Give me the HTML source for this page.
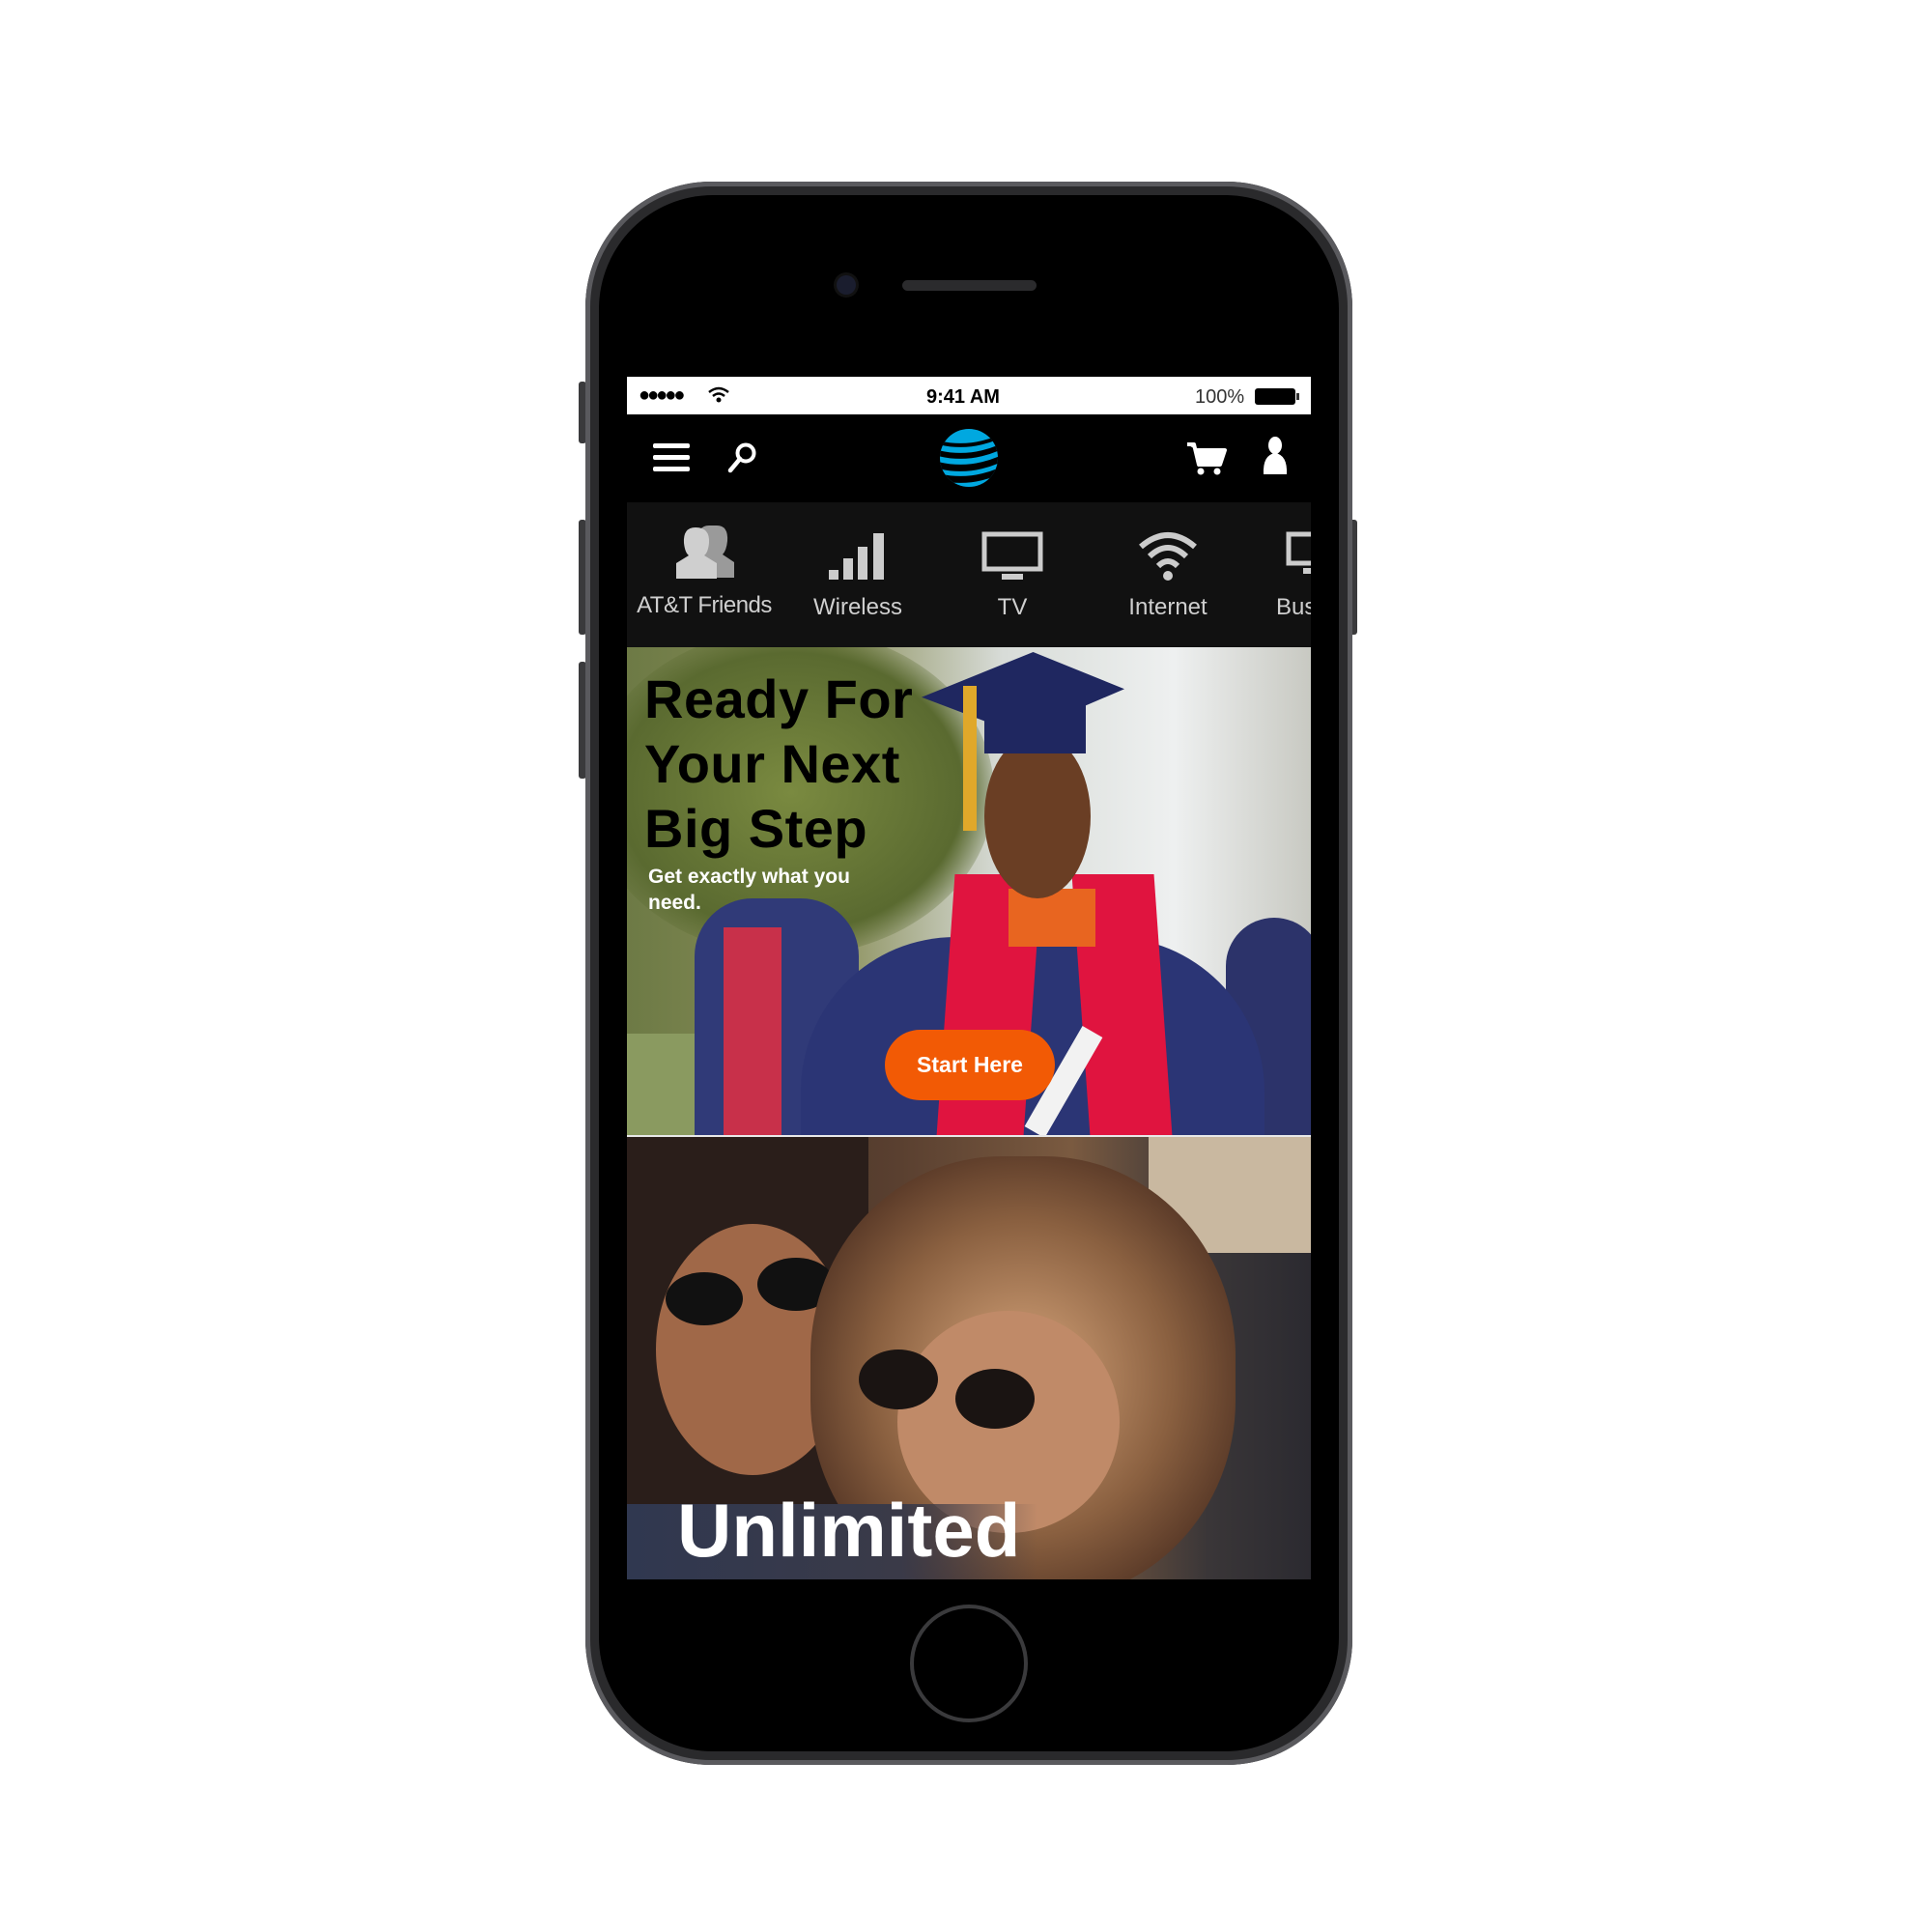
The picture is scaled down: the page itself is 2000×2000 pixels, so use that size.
<!DOCTYPE html>
<html><head><meta charset="utf-8"><style>
*{margin:0;padding:0;box-sizing:border-box}
body{width:2000px;height:2000px;background:#fff;position:relative;overflow:hidden;font-family:"Liberation Sans",sans-serif}
.abs{position:absolute}
.phone{left:606px;top:188px;width:794px;height:1639px;border-radius:130px;background:#2a2a2c;box-shadow:inset 0 0 0 5px #5a5a5e}
.face{left:620px;top:202px;width:766px;height:1611px;border-radius:118px;background:#000}
.btn{background:#3a3a3c;width:8px;border-radius:3px}
.screen{left:649px;top:390px;width:708px;height:1245px;overflow:hidden;background:#000}
.cat{position:absolute;top:0;width:160px;text-align:center;color:#cfcfcf;font-size:24px}
</style></head><body>
<div class="abs btn" style="left:599px;top:395px;height:64px"></div>
<div class="abs btn" style="left:599px;top:538px;height:119px"></div>
<div class="abs btn" style="left:599px;top:685px;height:121px"></div>
<div class="abs btn" style="left:1397px;top:538px;height:119px"></div>
<div class="abs phone"></div>
<div class="abs face"></div>
<div class="abs" style="left:866px;top:285px;width:20px;height:20px;border-radius:50%;background:#1a1d2e;box-shadow:0 0 0 3px #111"></div>
<div class="abs" style="left:934px;top:290px;width:139px;height:11px;border-radius:6px;background:#2b2b2d"></div>
<div class="abs" style="left:942px;top:1661px;width:122px;height:122px;border-radius:50%;border:4px solid #3a3a3c"></div>

<div class="abs screen">
 <div class="abs" style="left:0;top:0;width:708px;height:39px;background:#fff;font-size:20px;color:#000">
  <div class="abs" style="left:12px;top:11px;letter-spacing:-3px;font-size:20px;line-height:16px">●●●●●</div>
  <svg class="abs" style="left:83px;top:10px" width="24" height="18" viewBox="0 0 24 18"><path d="M2 6 Q12 -2 22 6" stroke="#000" stroke-width="2.5" fill="none"/><path d="M6 10 Q12 5 18 10" stroke="#000" stroke-width="2.5" fill="none"/><circle cx="12" cy="14" r="2.5"/></svg>
  <div class="abs" style="left:310px;top:10px;font-weight:bold">9:41 AM</div>
  <div class="abs" style="left:588px;top:10px;color:#333">100%</div>
  <div class="abs" style="left:650px;top:12px;width:42px;height:17px;background:#000;border-radius:3px"></div>
  <div class="abs" style="left:693px;top:17px;width:3px;height:7px;background:#333"></div>
 </div>
 <div class="abs" style="left:0;top:39px;width:708px;height:91px;background:#000">
  <div class="abs" style="left:27px;top:30px;width:38px;height:5px;background:#fff;border-radius:2px"></div>
  <div class="abs" style="left:27px;top:42px;width:38px;height:5px;background:#fff;border-radius:2px"></div>
  <div class="abs" style="left:27px;top:54px;width:38px;height:5px;background:#fff;border-radius:2px"></div>
  <svg class="abs" style="left:102px;top:28px" width="34" height="34" viewBox="0 0 34 34"><circle cx="21" cy="12" r="8.5" stroke="#fff" stroke-width="4" fill="none"/><path d="M15 18 L5 30" stroke="#fff" stroke-width="4.5" stroke-linecap="round"/></svg>
  <svg class="abs" style="left:322px;top:13px" width="64" height="64" viewBox="0 0 64 64"><defs><clipPath id="g"><circle cx="32" cy="32" r="30"/></clipPath></defs><circle cx="32" cy="32" r="30" fill="#00a8e0"/><g clip-path="url(#g)" fill="#000"><path d="M0 14 Q32 22 64 8 L64 12 Q32 26 0 18Z"/><path d="M0 24 Q32 32 64 18 L64 24 Q32 38 0 30Z"/><path d="M0 36 Q32 44 64 30 L64 37 Q32 51 0 43Z"/><path d="M0 48 Q32 56 64 42 L64 49 Q32 63 0 55Z"/></g></svg>
  <svg class="abs" style="left:578px;top:28px" width="44" height="36" viewBox="0 0 44 36"><path d="M2 3 H9 L14 24 H36 L41 9 H12" stroke="#fff" stroke-width="4" fill="#fff" stroke-linejoin="round"/><circle cx="16" cy="31" r="3.5" fill="#fff"/><circle cx="33" cy="31" r="3.5" fill="#fff"/></svg>
  <svg class="abs" style="left:656px;top:22px" width="30" height="44" viewBox="0 0 30 44"><ellipse cx="15" cy="10" rx="7" ry="9" fill="#fff"/><path d="M3 40 Q2 20 15 18 Q28 20 27 40Z" fill="#fff"/></svg>
 </div>
 <div class="abs" style="left:0;top:130px;width:708px;height:150px;background:#111">
  <div class="cat" style="left:5px;width:150px">
   <svg style="margin-top:22px" width="66" height="60" viewBox="0 0 66 60"><path d="M38 2 Q26 2 27 18 Q28 28 32 32 L20 40 L20 56 L64 56 L64 40 L52 32 Q56 28 57 18 Q58 2 46 2Z" fill="#9a9a9a"/><path d="M24 4 Q11 4 12 20 Q13 30 17 33 L4 41 L4 57 L46 57 L46 41 L33 33 Q37 30 38 20 Q39 4 24 4Z" fill="#cfcfcf"/></svg>
   <div style="margin-top:4px;letter-spacing:-0.5px">AT&amp;T Friends</div>
  </div>
  <div class="cat" style="left:159px">
   <svg style="margin-top:30px" width="64" height="52" viewBox="0 0 64 52"><rect x="2" y="40" width="10" height="10" fill="#ccc"/><rect x="17" y="28" width="10" height="22" fill="#ccc"/><rect x="32" y="16" width="10" height="34" fill="#ccc"/><rect x="48" y="2" width="11" height="48" fill="#ccc"/></svg>
   <div style="margin-top:6px">Wireless</div>
  </div>
  <div class="cat" style="left:319px">
   <svg style="margin-top:30px" width="64" height="52" viewBox="0 0 64 52"><rect x="3" y="3" width="58" height="36" stroke="#ccc" stroke-width="5" fill="none"/><rect x="21" y="44" width="22" height="6" fill="#ccc"/></svg>
   <div style="margin-top:6px">TV</div>
  </div>
  <div class="cat" style="left:480px">
   <svg style="margin-top:28px" width="64" height="54" viewBox="0 0 64 54"><path d="M4 18 Q32 -6 60 18" stroke="#ccc" stroke-width="6" fill="none"/><path d="M13 28 Q32 10 51 28" stroke="#ccc" stroke-width="6" fill="none"/><path d="M22 38 Q32 28 42 38" stroke="#ccc" stroke-width="6" fill="none"/><circle cx="32" cy="48" r="5" fill="#ccc"/></svg>
   <div style="margin-top:6px">Internet</div>
  </div>
  <div class="cat" style="left:672px;text-align:left">
   <svg style="margin-top:30px;margin-left:10px" width="30" height="52" viewBox="0 0 30 52"><rect x="3" y="3" width="30" height="30" stroke="#ccc" stroke-width="5" fill="none"/><rect x="18" y="38" width="12" height="6" fill="#ccc"/></svg>
   <div style="margin-top:6px;margin-left:0">Bus</div>
  </div>
 </div>
 <div class="abs" style="left:0;top:280px;width:708px;height:506px;overflow:hidden;background:linear-gradient(90deg,#6d7a45 0%,#8a8f5a 30%,#d8dcd8 55%,#eef0f0 80%,#c8c9c2 100%)">
  <div class="abs" style="left:-40px;top:-20px;width:420px;height:340px;border-radius:50%;background:radial-gradient(#7a8a40,#5a6a30 60%,transparent 75%)"></div>
  <div class="abs" style="left:0;top:400px;width:120px;height:106px;background:#8a9a60"></div>
  <div class="abs" style="left:70px;top:260px;width:170px;height:246px;border-radius:60px 60px 0 0;background:#303a78"></div>
  <div class="abs" style="left:100px;top:290px;width:60px;height:216px;background:#c8304a"></div>
  <div class="abs" style="left:620px;top:280px;width:100px;height:226px;border-radius:50px 50px 0 0;background:#2c336a"></div>
  <div class="abs" style="left:180px;top:300px;width:480px;height:260px;border-radius:160px 160px 0 0;background:#2b3575"></div>
  <div class="abs" style="left:330px;top:235px;width:90px;height:271px;background:#e0143f;transform:skewX(-4deg)"></div>
  <div class="abs" style="left:470px;top:235px;width:85px;height:271px;background:#e0143f;transform:skewX(4deg)"></div>
  <div class="abs" style="left:395px;top:250px;width:90px;height:60px;background:#e86520"></div>
  <div class="abs" style="left:370px;top:90px;width:110px;height:170px;border-radius:50%;background:#6a3e24"></div>
  <div class="abs" style="left:305px;top:5px;width:210px;height:85px;background:#1f2760;clip-path:polygon(0 55%,55% 0,100% 45%,48% 100%)"></div>
  <div class="abs" style="left:370px;top:55px;width:105px;height:55px;background:#1f2760"></div>
  <div class="abs" style="left:348px;top:40px;width:14px;height:150px;background:#e0a82a"></div>
  <div class="abs" style="left:440px;top:390px;width:24px;height:120px;background:#f2f2f2;transform:rotate(30deg)"></div>
  <div class="abs" style="left:18px;top:20px;font-size:56px;font-weight:bold;color:#000;line-height:67px;letter-spacing:0.5px">Ready For<br>Your Next<br>Big Step</div>
  <div class="abs" style="left:22px;top:224px;font-size:21px;font-weight:bold;color:#fff;line-height:27px">Get exactly what you<br>need.</div>
  <div class="abs" style="left:267px;top:396px;width:176px;height:73px;border-radius:37px;background:#f25a05;color:#fff;font-weight:bold;font-size:23px;text-align:center;line-height:73px">Start Here</div>
 </div>
 <div class="abs" style="left:0;top:785px;width:708px;height:2px;background:#e8e8e8"></div>
 <div class="abs" style="left:0;top:787px;width:708px;height:458px;overflow:hidden;background:linear-gradient(90deg,#3a2a22 0%,#5a4030 40%,#7a5a40 65%,#3a3638 85%,#2b2a30 100%)">
  <div class="abs" style="left:540px;top:0;width:168px;height:120px;background:#c9b8a0"></div>
  <div class="abs" style="left:0;top:0;width:250px;height:458px;background:#2a1e1a"></div>
  <div class="abs" style="left:30px;top:90px;width:200px;height:260px;border-radius:50%;background:#a06848"></div>
  <div class="abs" style="left:40px;top:140px;width:80px;height:55px;border-radius:50%;background:#111"></div>
  <div class="abs" style="left:135px;top:125px;width:80px;height:55px;border-radius:50%;background:#111"></div>
  <div class="abs" style="left:190px;top:20px;width:440px;height:460px;border-radius:45%;background:radial-gradient(#c89870 10%,#8a6040 50%,#5a3a28 75%)"></div>
  <div class="abs" style="left:280px;top:180px;width:230px;height:230px;border-radius:50%;background:#c08a68"></div>
  <div class="abs" style="left:240px;top:220px;width:82px;height:62px;border-radius:50%;background:#1a1412"></div>
  <div class="abs" style="left:340px;top:240px;width:82px;height:62px;border-radius:50%;background:#1a1412"></div>
  <div class="abs" style="left:0;top:380px;width:708px;height:78px;background:linear-gradient(90deg,#303850,#3a3a48 40%,transparent 60%)"></div>
  <div class="abs" style="left:52px;top:362px;font-size:78px;font-weight:bold;color:#fff;line-height:90px">Unlimited<br>&nbsp;i&nbsp;&nbsp;&nbsp;&nbsp;&nbsp;&nbsp;&nbsp;&nbsp;&nbsp;&nbsp;d</div>
 </div>
</div>
</body></html>
